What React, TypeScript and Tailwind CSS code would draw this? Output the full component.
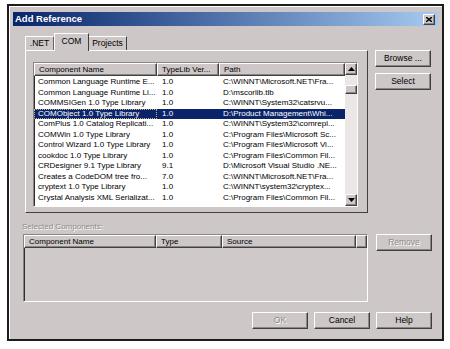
const rows = [
    ["Common Language Runtime E...", "1.0", "C:\\WINNT\\Microsoft.NET\\Fra..."],
    ["Common Language Runtime Li...", "1.0", "D:\\mscorlib.tlb"],
    ["COMMSIGen 1.0 Type Library", "1.0", "C:\\WINNT\\System32\\catsrvu..."],
    ["COMObject 1.0 Type Library", "1.0", "D:\\Product Management\\Whi..."],
    ["ComPlus 1.0 Catalog Replicati...", "1.0", "C:\\WINNT\\System32\\comrepl..."],
    ["COMWin 1.0 Type Library", "1.0", "C:\\Program Files\\Microsoft Sc..."],
    ["Control Wizard 1.0 Type Library", "1.0", "C:\\Program Files\\Microsoft Vi..."],
    ["cookdoc 1.0 Type Library", "1.0", "C:\\Program Files\\Common Fil..."],
    ["CRDesigner 9.1 Type Library", "9.1", "D:\\Microsoft Visual Studio .NE..."],
    ["Creates a CodeDOM tree fro...", "7.0", "C:\\WINNT\\Microsoft.NET\\Fra..."],
    ["cryptext 1.0 Type Library", "1.0", "C:\\WINNT\\system32\\cryptex..."],
    ["Crystal Analysis XML Serializat...", "1.0", "C:\\Program Files\\Common Fil..."],
]

const raised =
    "border border-t-white border-l-white border-r-[#404040] border-b-[#404040] shadow-[inset_-1px_-1px_0_#8a8484]"
const sunken =
    "border border-t-[#8a8484] border-l-[#8a8484] border-r-white border-b-white shadow-[inset_1px_1px_0_#303030]"
const disabled = "text-[#8f8989] [text-shadow:1px_1px_0_#fff]"

function Button({ label, off }: { label: string; off?: boolean }) {
    return (
        <div
            className={`flex h-[17px] w-[56px] items-center justify-center bg-[#cdc7c7] text-[8.5px] ${raised} ${off ? disabled : "text-black"}`}
        >
            {label}
        </div>
    )
}

function HeaderCell({ label, w }: { label: string; w: string }) {
    return (
        <div
            className={`flex h-[13px] shrink-0 items-center overflow-hidden whitespace-nowrap bg-[#cdc7c7] pl-[4px] text-[8px] ${raised} ${w}`}
        >
            {label}
        </div>
    )
}

function Arrow({ up }: { up?: boolean }) {
    return (
        <div className={`flex h-[12px] w-[12px] items-center justify-center bg-[#cdc7c7] ${raised}`}>
            <svg width="7" height="4" viewBox="0 0 7 4">
                <path d={up ? "M0 4 L3.5 0 L7 4 Z" : "M0 0 L3.5 4 L7 0 Z"} fill="#000" />
            </svg>
        </div>
    )
}

export default function App() {
    return (
        <div className="h-[349px] w-[450px] overflow-hidden bg-white pl-[7px] pt-[4px] font-['Liberation_Sans',Arial,sans-serif] text-black">
            <div className="flex h-[337px] w-[437px] flex-col border-2 border-[#1c1c1c] bg-[#cdc7c7] px-[4px] pt-[6px] shadow-[inset_1px_1px_0_#fff]">
                {/* title bar */}
                <div className="flex h-[14px] items-center justify-between bg-linear-to-r from-[#0a246a] to-[#a6caf0] pl-[2px] pr-[3px]">
                    <span className="text-[9.5px] font-bold text-white">Add Reference</span>
                    <div className={`flex h-[11px] w-[12px] items-center justify-center bg-[#cdc7c7] ${raised}`}>
                        <svg width="6" height="5" viewBox="0 0 6 5">
                            <path d="M0 0 L6 5 M6 0 L0 5" stroke="#000" strokeWidth="1.4" />
                        </svg>
                    </div>
                </div>

                <div className="mt-[7px] flex">
                    <div className="ml-[12px] w-[343px]">
                        {/* tabs */}
                        <div className="flex h-[17px] items-end text-[8.5px]">
                            <div className="flex h-[14px] w-[29px] items-center justify-center border-l border-t border-r border-l-white border-t-white border-r-[#6a6464]">
                                .NET
                            </div>
                            <div className="relative z-10 -mb-px flex h-[18px] w-[35px] items-center justify-center border-l border-t border-r border-l-white border-t-white border-r-[#404040] bg-[#cdc7c7] pb-[2px]">
                                COM
                            </div>
                            <div className="flex h-[14px] w-[38px] items-center justify-center border-t border-r border-t-white border-r-[#404040]">
                                Projects
                            </div>
                        </div>

                        {/* tab panel */}
                        <div className="h-[163px] border border-b-[#404040] border-l-white border-r-[#404040] border-t-white pl-[7px] pt-[11px]">
                            <div className={`flex h-[145px] w-[325px] overflow-hidden bg-white ${sunken}`}>
                                <div className="w-[311px]">
                                    <div className="flex">
                                        <HeaderCell label="Component Name" w="w-[123px]" />
                                        <HeaderCell label="TypeLib Ver..." w="w-[62px]" />
                                        <HeaderCell label="Path" w="w-[126px]" />
                                    </div>
                                    <div className="pt-[1px]">
                                        {rows.map((r, i) => {
                                            const sel = i === 3
                                            return (
                                                <div
                                                    key={i}
                                                    className={`flex h-[10.5px] items-center whitespace-nowrap text-[8px] leading-[10.5px] ${sel ? "bg-[#0a246a] text-white" : ""}`}
                                                >
                                                    <div
                                                        className={`w-[123px] shrink-0 overflow-hidden pl-[4px] ${sel ? "outline outline-1 -outline-offset-1 outline-dotted outline-[#c9b27a]" : ""}`}
                                                    >
                                                        {r[0]}
                                                    </div>
                                                    <div className="w-[62px] shrink-0 overflow-hidden pl-[5px]">{r[1]}</div>
                                                    <div className="w-[126px] shrink-0 overflow-hidden pl-[4px]">{r[2]}</div>
                                                </div>
                                            )
                                        })}
                                    </div>
                                </div>
                                <div className="flex w-[12px] flex-col bg-[#ebe7e7]">
                                    <Arrow up />
                                    <div className="h-[10px]" />
                                    <div className={`h-[9px] w-[12px] bg-[#cdc7c7] ${raised}`} />
                                    <div className="flex-1" />
                                    <Arrow />
                                </div>
                            </div>
                        </div>
                    </div>

                    <div className="ml-[7px] flex flex-col gap-[6px] pt-[17px]">
                        <Button label="Browse ..." />
                        <Button label="Select" />
                    </div>
                </div>

                <div className={`ml-[9px] mt-[9px] h-[9px] text-[8px] leading-[9px] ${disabled}`}>
                    Selected Components:
                </div>

                <div className="mt-[3px] flex">
                    <div className={`ml-[10px] h-[68px] w-[345px] bg-[#cfc9c9] ${sunken}`}>
                        <div className="flex">
                            <HeaderCell label="Component Name" w="w-[132px]" />
                            <HeaderCell label="Type" w="w-[66px]" />
                            <HeaderCell label="Source" w="w-[134px]" />
                            <HeaderCell label="" w="w-[11px]" />
                        </div>
                    </div>
                    <div className="ml-[8px]">
                        <Button label="Remove" off />
                    </div>
                </div>

                <div className="mt-[10px] flex justify-end gap-[6px] pr-[6px]">
                    <Button label="OK" off />
                    <Button label="Cancel" />
                    <Button label="Help" />
                </div>
            </div>
        </div>
    )
}
